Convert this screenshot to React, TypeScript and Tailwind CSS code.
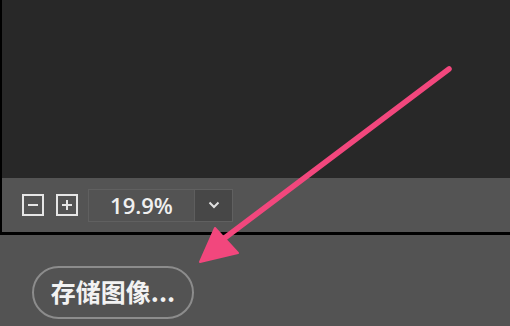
import React from "react";

export default function App() {
  return (
    <div className="relative w-[510px] h-[326px] overflow-hidden bg-[#535353] font-['Liberation_Sans','Noto_Sans_CJK_SC',sans-serif]">
      {/* Canvas */}
      <div className="h-[178px] border-l-2 border-black bg-[#282828]" />

      {/* Zoom toolbar */}
      <div className="flex h-[54px] items-center border-l-2 border-black bg-[#545454] pl-[20px]">
        <div className="flex h-[22px] w-[22px] items-center justify-center border-2 border-[#e6e6e6]">
          <div className="h-[2px] w-[10px] bg-[#e6e6e6]" />
        </div>
        <div className="relative ml-[12px] flex h-[22px] w-[22px] items-center justify-center border-2 border-[#e6e6e6]">
          <div className="h-[2px] w-[10px] bg-[#e6e6e6]" />
          <div className="absolute h-[10px] w-[2px] bg-[#e6e6e6]" />
        </div>
        <div className="ml-[10px] flex h-[33px] w-[145px] border border-[#606060] bg-[#535353]">
          <div className="flex flex-1 items-center justify-center text-[22px] font-semibold text-[#f0f0f0] font-['Open_Sans',sans-serif]">
            19.9%
          </div>
          <div className="flex w-[38px] items-center justify-center border-l border-[#5e5e5e] bg-[#474747]">
            <svg width="12" height="8" viewBox="0 0 12 8">
              <path d="M1.5 1.5 L6 6 L10.5 1.5" fill="none" stroke="#e0e0e0" strokeWidth="2" />
            </svg>
          </div>
        </div>
      </div>

      {/* Divider */}
      <div className="h-[3px] bg-black" />

      {/* Bottom area */}
      <div className="pl-[32px] pt-[31px]">
        <button className="flex h-[53px] w-[162px] items-center justify-center rounded-full border-2 border-[#8c8c8c] pb-[2px] text-[25px] font-bold text-[#f2f2f2] font-['Noto_Sans_CJK_SC',sans-serif]">
          存储图像...
        </button>
      </div>

      {/* Annotation arrow */}
      <svg className="pointer-events-none absolute left-0 top-0" width="510" height="326" viewBox="0 0 510 326">
        <line x1="449" y1="69" x2="222" y2="240" stroke="#f2477d" strokeWidth="5.5" strokeLinecap="round" />
        <polygon points="200,262 215,228 238,253" fill="#f2477d" strokeLinejoin="round" stroke="#f2477d" strokeWidth="2" />
      </svg>
    </div>
  );
}
